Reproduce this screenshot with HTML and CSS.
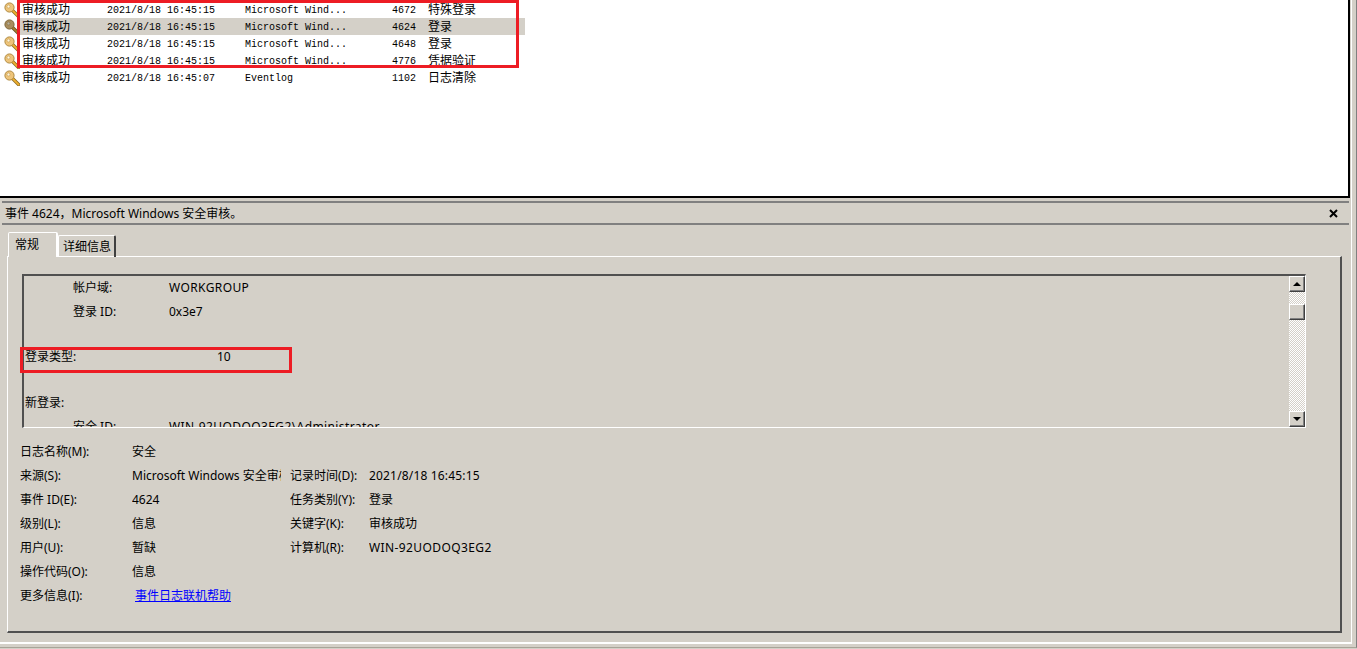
FILE: index.html
```html
<!DOCTYPE html>
<html lang="zh-CN">
<head>
<meta charset="utf-8">
<title>事件查看器</title>
<link rel="stylesheet" href="styles.css">
</head>
<body>
<svg class="defs" width="0" height="0" aria-hidden="true">
  <symbol id="key" viewBox="0 0 16 16">
    <path d="M8 8l6.500 6.500" stroke="#8a6a20" stroke-width="3.400" stroke-linecap="square" fill="none"/>
    <path d="M8 8l6.500 6.500" stroke="#f0b030" stroke-width="1.800" stroke-linecap="square" fill="none"/>
    <circle cx="5.500" cy="5.500" r="4.600" fill="#eec47a" stroke="#b08a40"/>
    <circle cx="4.500" cy="4.500" r="1.500" fill="#fff6dc" stroke="#c09a50" stroke-width=".6"/>
  </symbol>
</svg>
<div class="frame">
  <div class="shell">
    <section class="list">
      <div class="row">
        <svg class="key"><use href="#key"/></svg><span class="c-level">审核成功</span><span class="c-date">2021/8/18 16:45:15</span><span class="c-src">Microsoft Wind...</span><span class="c-id">4672</span><span class="c-cat">特殊登录</span>
      </div>
      <div class="row selected">
        <svg class="key"><use href="#key"/></svg><span class="c-level">审核成功</span><span class="c-date">2021/8/18 16:45:15</span><span class="c-src">Microsoft Wind...</span><span class="c-id">4624</span><span class="c-cat">登录</span>
      </div>
      <div class="row">
        <svg class="key"><use href="#key"/></svg><span class="c-level">审核成功</span><span class="c-date">2021/8/18 16:45:15</span><span class="c-src">Microsoft Wind...</span><span class="c-id">4648</span><span class="c-cat">登录</span>
      </div>
      <div class="row">
        <svg class="key"><use href="#key"/></svg><span class="c-level">审核成功</span><span class="c-date">2021/8/18 16:45:15</span><span class="c-src">Microsoft Wind...</span><span class="c-id">4776</span><span class="c-cat">凭据验证</span>
      </div>
      <div class="row">
        <svg class="key"><use href="#key"/></svg><span class="c-level">审核成功</span><span class="c-date">2021/8/18 16:45:07</span><span class="c-src">Eventlog</span><span class="c-id">1102</span><span class="c-cat">日志清除</span>
      </div>
      <div class="mark mark-list"></div>
    </section>

    <section class="detail">
      <header class="detail-head">
        <span>事件 4624，Microsoft Windows 安全审核。</span>
        <svg class="close" width="9" height="9" viewBox="0 0 9 9"><path d="M1 1l7 7M8 1l-7 7" stroke="#000" stroke-width="2" fill="none"/></svg>
      </header>
      <div class="tabs">
        <div class="tab active">常规</div>
        <div class="tab">详细信息</div>
      </div>
      <div class="panel">
        <div class="box">
          <div class="box-text">
            <div class="line"><span class="k2">帐户域:</span><span class="caps">WORKGROUP</span></div>
            <div class="line"><span class="k2">登录 ID:</span><span>0x3e7</span></div>
            <div class="blank"></div>
            <div class="line"><span class="k1">登录类型:</span><span>10</span></div>
            <div class="blank wide"></div>
            <div class="line"><span>新登录:</span></div>
            <div class="line"><span class="k2">安全 ID:</span><span class="caps">WIN-92UODOQ3EG2\Administrator</span></div>
          </div>
          <div class="scrollbar">
            <div class="sb-btn"><span class="arrow-up"></span></div>
            <div class="sb-thumb"></div>
            <div class="sb-btn sb-down"><span class="arrow-down"></span></div>
          </div>
        </div>
        <div class="mark mark-type"></div>
        <div class="fields">
          <span>日志名称(M):</span><span class="val">安全</span><span></span><span></span>
          <span>来源(S):</span><span class="val">Microsoft Windows 安全审核</span><span>记录时间(D):</span><span class="date">2021/8/18 16:45:15</span>
          <span>事件 ID(E):</span><span class="val">4624</span><span>任务类别(Y):</span><span>登录</span>
          <span>级别(L):</span><span class="val">信息</span><span>关键字(K):</span><span>审核成功</span>
          <span>用户(U):</span><span class="val">暂缺</span><span>计算机(R):</span><span class="caps">WIN-92UODOQ3EG2</span>
          <span>操作代码(O):</span><span class="val">信息</span><span></span><span></span>
          <span>更多信息(I):</span><span class="val"><a class="help" href="#">事件日志联机帮助</a></span><span></span><span></span>
        </div>
      </div>
    </section>
  </div>
</div>
</body>
</html>
```
FILE: styles.css
```css
* { box-sizing: border-box; }
html, body { margin: 0; padding: 0; }
body {
  width: 1357px;
  height: 649px;
  overflow: hidden;
  background: #d4d0c8;
  color: #000;
  font: 12px/17px "Noto Sans", "Noto Sans CJK SC", sans-serif;
}
.defs { position: absolute; }
.frame {
  width: 1357px;
  height: 648px;
  border-right: 1px solid #808080;
  border-bottom: 1px solid #a8a498;
  padding-right: 4px;
  padding-bottom: 3px;
}
.shell {
  height: 644px;
  border-right: 1px solid #fff;
  border-bottom: 2px solid #fff;
  display: flex;
  flex-direction: column;
}
.list {
  position: relative;
  height: 198px;
  width: 1350px;
  flex: none;
  padding-top: 1px;
  background: #fff;
  border-right: 2px solid #000;
  border-bottom: 2px solid #000;
}
.row {
  display: flex;
  align-items: center;
  height: 17px;
  width: 525px;
  font-family: "Noto Sans CJK SC", sans-serif;
  white-space: nowrap;
}
.key { width: 16px; height: 16px; margin: 0 2px 0 4px; flex: none; }
.selected { background: linear-gradient(#d4d0c8, #d4d0c8) 19px 0 / 506px 100% no-repeat; }
.selected .key { filter: brightness(.72) saturate(.9); }
.c-level { width: 85px; margin-top: -2px; }
.c-cat { margin-top: -2px; }
.c-date, .c-src, .c-id {
  font: 10px/17px "Liberation Mono", monospace;
  margin-top: 2px;
}
.c-date { width: 138px; }
.c-src { width: 147px; }
.c-id { width: 36px; }

.mark { position: absolute; border: 3px solid #ed1c24; }
.mark-list { left: 17px; top: 0; width: 502px; height: 68px; }
.mark-type { left: 12px; top: 90px; width: 272px; height: 26px; }

.detail { flex: 1; display: flex; flex-direction: column; padding-top: 3px; }
.detail-head {
  display: flex;
  align-items: center;
  justify-content: space-between;
  height: 24px;
  width: 1347px;
  margin-left: 2px;
  padding: 0 11px 0 3px;
  border-top: 2px solid #808080;
  border-bottom: 2px solid #808080;
}
.tabs { display: flex; align-items: flex-end; height: 25px; margin: 7px 0 0 8px; position: relative; z-index: 1; }
.tab {
  width: 58px;
  height: 22px;
  padding-left: 4px;
  line-height: 20px;
  font-family: "Noto Sans CJK SC", sans-serif;
  border-left: 1px solid #fff;
  border-top: 1px solid #fff;
  border-right: 2px solid #404040;
  border-radius: 2px 2px 0 0;
}
.tab.active {
  width: 50px;
  height: 25px;
  padding-left: 6px;
  line-height: 21px;
  background: #d4d0c8;
  border-right-color: #fff;
}
.panel {
  position: relative;
  width: 1335px;
  height: 377px;
  margin-left: 7px;
  margin-top: -1px;
  padding: 17px 0 0 15px;
  border-left: 1px solid #fff;
  border-top: 1px solid #fff;
  border-right: 2px solid #505050;
  border-bottom: 2px solid #505050;
}
.box {
  display: flex;
  width: 1284px;
  height: 154px;
  margin-left: -1px;
  border-left: 2px solid #505050;
  border-top: 2px solid #505050;
  border-right: 1px solid #fff;
  border-bottom: 1px solid #fff;
}
.box-text {
  flex: 1;
  min-width: 0;
  overflow: hidden;
  padding-left: 1px;
}
.line { display: flex; height: 24px; line-height: 23px; white-space: nowrap; }
.line span { display: block; }
.k2 { width: 96px; margin-left: 48px; }
.k1 { width: 192px; }
.blank { height: 21px; }
.blank.wide { height: 22px; }
.caps { letter-spacing: .4px; }
.date { letter-spacing: .17px; }

.scrollbar {
  width: 16px;
  flex: none;
  display: flex;
  flex-direction: column;
  background: conic-gradient(#fff 25%, #d4d0c8 0 50%, #fff 0 75%, #d4d0c8 0) 0 0 / 2px 2px;
}
.sb-btn, .sb-thumb {
  height: 16px;
  flex: none;
  background: #d4d0c8;
  border: 1px solid;
  border-color: #fff #404040 #404040 #fff;
  box-shadow: inset -1px -1px 0 #808080;
}
.sb-btn { display: flex; align-items: center; justify-content: center; }
.sb-thumb { margin-top: 12px; }
.sb-down { margin-top: auto; }
.arrow-up, .arrow-down {
  width: 0; height: 0;
  border-left: 4px solid transparent;
  border-right: 4px solid transparent;
}
.arrow-up { border-bottom: 4px solid #000; }
.arrow-down { border-top: 4px solid #000; }

.fields {
  display: grid;
  grid-template-columns: 112px 158px 79px 1fr;
  grid-auto-rows: 24px;
  margin: 12px 0 0 -3px;
  line-height: 24px;
  white-space: nowrap;
}
.fields > span { overflow: hidden; }
.fields > .val { margin-right: 9px; }
.help { color: #0000ff; margin-left: 3px; line-height: 1; font-family: "Noto Sans CJK SC", sans-serif; }
```
